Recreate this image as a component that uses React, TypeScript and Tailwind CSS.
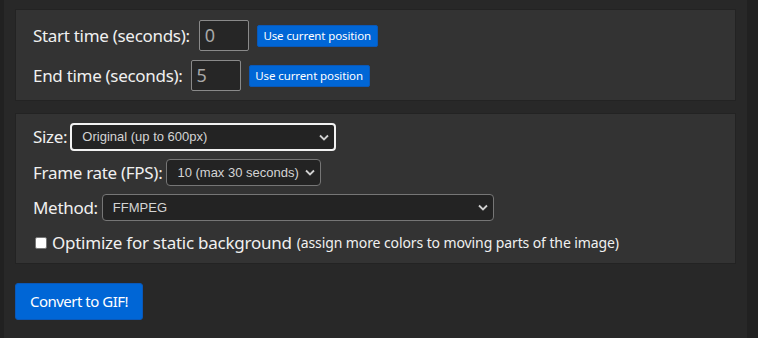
import React from "react";

const Chevron = () => (
  <svg width="10" height="7" viewBox="0 0 10 7" className="shrink-0">
    <path d="M1 1.5 L5 5.5 L9 1.5" fill="none" stroke="#d0d0d0" strokeWidth="1.8" />
  </svg>
);

function Select({ w, text, focused }: { w: string; text: string; focused?: boolean }) {
  return (
    <div
      className={`${w} flex items-center justify-between rounded-[4px] bg-[#232323] pl-[10px] pr-[5px] text-[13px] text-[#d4d4d4] ${
        focused ? "h-[28px] border-2 border-[#f2f2f2]" : "h-[27px] border border-[#767676]"
      }`}
      style={{ fontFamily: '"Liberation Sans", Arial, sans-serif' }}
    >
      <span>{text}</span>
      <Chevron />
    </div>
  );
}

function TimeRow({ label, value, gap }: { label: string; value: string; gap: string }) {
  return (
    <div className="flex items-center">
      <span className="text-[17px] tracking-[-0.3px] text-[#f0f0f0]">{label}</span>
      <div className={`${gap} flex h-[31px] w-[50px] items-center rounded-[2px] border border-[#8a8a8a] bg-[#262626] pl-[5px] text-[18px] text-[#a8a8a8]`}>
        {value}
      </div>
      <button className="ml-[8px] h-[22px] w-[121px] rounded-[2px] border border-[#0a58b8] bg-[#0066d6] text-[11.5px] tracking-[-0.1px] text-white">
        Use current position
      </button>
    </div>
  );
}

export default function App() {
  return (
    <div
      className="flex h-[338px] w-[758px] bg-[#212121]"
      style={{ fontFamily: '"Noto Sans", "Open Sans", sans-serif' }}
    >
      <div className="ml-[4px] flex w-[743px] flex-col bg-[#282828] px-[11px] pt-[9px]">
        <div className="flex flex-col gap-[9px] border border-[#232323] bg-[#333333] pb-[9px] pl-[17px] pt-[10px]">
          <TimeRow label="Start time (seconds):" value="0" gap="ml-[9px]" />
          <TimeRow label="End time (seconds):" value="5" gap="ml-[8px]" />
        </div>
        <div className="mt-[12px] flex h-[151px] flex-col border border-[#232323] bg-[#333333] pl-[17px] pt-[9px]">
          <div className="flex items-center">
            <span className="mr-[3px] text-[17px] tracking-[-0.3px] text-[#f0f0f0]">Size:</span>
            <Select w="w-[266px]" text="Original (up to 600px)" focused />
          </div>
          <div className="mt-[8px] flex items-center">
            <span className="mr-[4px] text-[17px] tracking-[-0.3px] text-[#f0f0f0]">Frame rate (FPS):</span>
            <Select w="w-[155px]" text="10 (max 30 seconds)" />
          </div>
          <div className="mt-[8px] flex items-center">
            <span className="mr-[4px] text-[17px] tracking-[-0.3px] text-[#f0f0f0]">Method:</span>
            <Select w="w-[392px]" text="FFMPEG" />
          </div>
          <div className="mt-[9px] flex items-center pl-[2px]">
            <span className="mr-[5px] h-[12px] w-[12px] rounded-[2px] border border-[#777] bg-white" />
            <span className="text-[17px] tracking-[-0.25px] text-[#f0f0f0]">Optimize for static background</span>
            <span className="ml-[5px] text-[14px] tracking-[-0.1px] text-[#f0f0f0]">(assign more colors to moving parts of the image)</span>
          </div>
        </div>
        <div className="mt-[19px]">
          <button className="h-[37px] w-[128px] rounded-[3px] border border-[#0a58b8] bg-[#0066d6] text-[15px] tracking-[-0.5px] text-white">
            Convert to GIF!
          </button>
        </div>
      </div>
    </div>
  );
}
